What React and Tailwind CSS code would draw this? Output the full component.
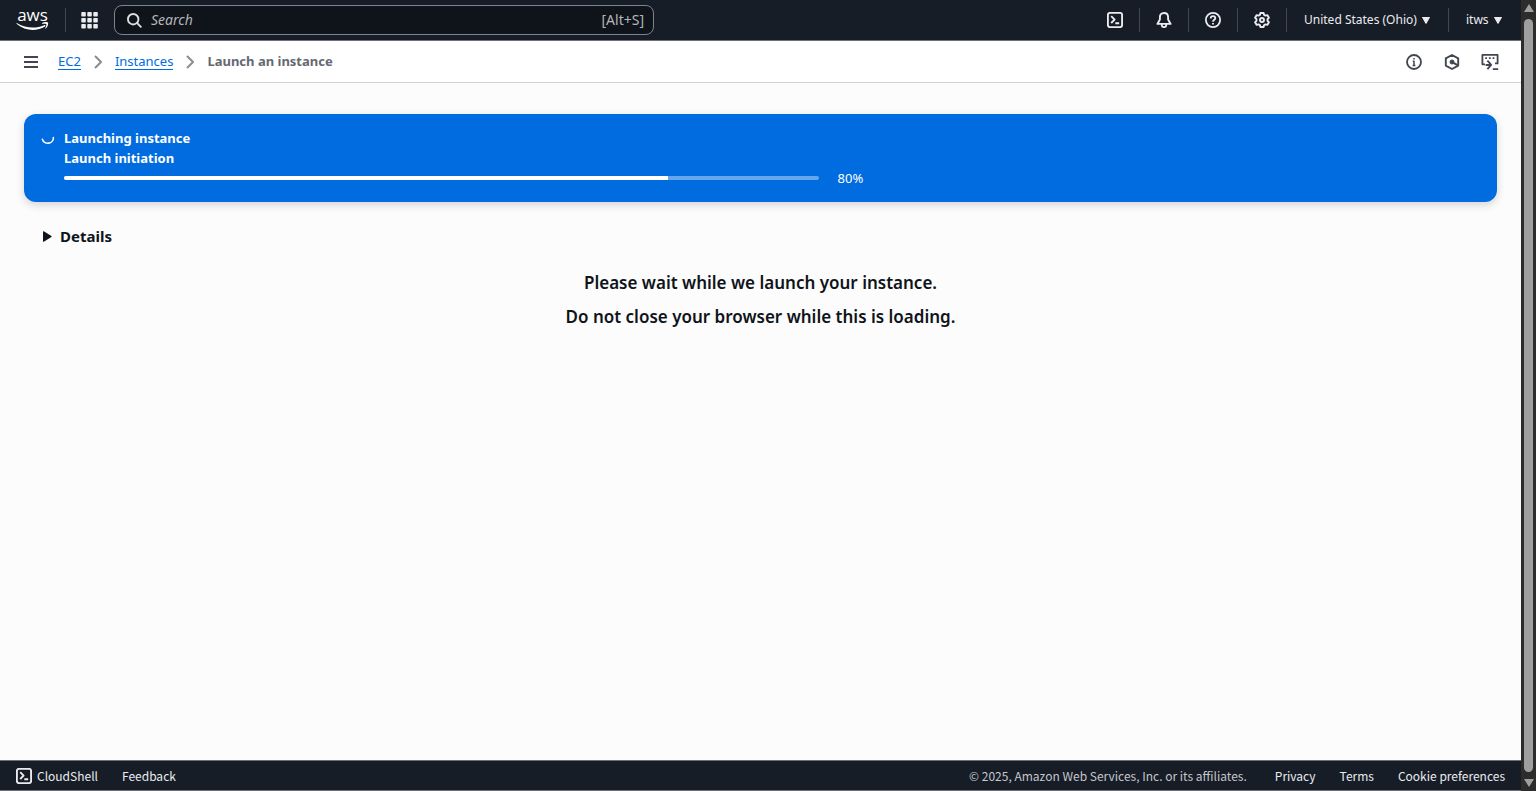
function Svg({ className, children, strokeWidth = 2 }) {
  return (
    <svg
      viewBox="0 0 16 16"
      className={className}
      fill="none"
      stroke="currentColor"
      strokeWidth={strokeWidth}
      strokeLinejoin="round"
      aria-hidden="true"
    >
      {children}
    </svg>
  );
}

function ShellIcon({ className }) {
  return (
    <Svg className={className} strokeWidth={1.9}>
      <rect x="0.9" y="0.9" width="14.2" height="14.2" rx="2" />
      <path d="M4.2 4.2 7.6 7.6 4.2 11M8.3 11.3H12.2" />
    </Svg>
  );
}

function BellIcon() {
  return (
    <Svg className="size-4" strokeWidth={1.9}>
      <path d="M8 1C5.3 1 3.9 2.9 3.9 5.2V7.6L1.4 11.9H14.6L12.1 7.6V5.2C12.1 2.9 10.7 1 8 1Z" />
      <path d="M5.8 12V13.2C5.8 14.4 6.8 15.1 8 15.1S10.2 14.4 10.2 13.2V12" />
    </Svg>
  );
}

function HelpIcon() {
  return (
    <Svg className="size-4" strokeWidth={1.8}>
      <circle cx="8" cy="8" r="7.1" />
      <path d="M5.7 6.5C5.7 5 6.7 4.2 8 4.2S10.3 5 10.3 6.2C10.3 7.8 8 7.8 8 9.8M8 10.9V12.5" />
    </Svg>
  );
}

function GearIcon() {
  return (
    <Svg className="size-4" strokeWidth={1.9}>
      <path d="M6.4 1H9.6L10.1 2.9 11.4 3.6 13.3 3.1 14.9 5.8 13.5 7.2V8.8L14.9 10.2 13.3 12.9 11.4 12.4 10.1 13.1 9.6 15H6.4L5.9 13.1 4.6 12.4 2.7 12.9 1.1 10.2 2.5 8.8V7.2L1.1 5.8 2.7 3.1 4.6 3.6 5.9 2.9Z" />
      <circle cx="8" cy="8" r="2" />
    </Svg>
  );
}

function InfoIcon() {
  return (
    <Svg className="size-4" strokeWidth={1.8}>
      <circle cx="8" cy="8" r="7" />
      <path d="M8 3.9V5.6M6.8 7.3H8V11.7M6.6 11.4H9.4" strokeWidth="1.5" />
    </Svg>
  );
}

function HexIcon() {
  return (
    <Svg className="size-4" strokeWidth={1.9}>
      <path d="M8 1 14.2 4.4V11.6L8 15 1.8 11.6V4.4Z" />
      <circle cx="8" cy="8" r="2" fill="currentColor" strokeWidth="1" />
      <path d="M8.5 8.4 13.6 11.2" />
    </Svg>
  );
}

function ConsoleIcon() {
  return (
    <Svg className="size-4 overflow-visible" strokeWidth={1.8}>
      <path d="M3 10.3H0.4V0.9H15.6V9.4H13" />
      <path d="M3.2 4.1H5M6.9 4.1H8.7M10.6 4.1H12.4" strokeWidth="1.6" />
      <path d="M3.6 11H9M5.4 6.6 9.2 10.9 5.4 15.2M10.8 15.2H16.2" />
    </Svg>
  );
}

function Caret() {
  return (
    <svg viewBox="0 0 8 7" className="h-[7px] w-2 shrink-0" fill="currentColor" aria-hidden="true">
      <path d="M0.4 0H7.6Q8.2 0 7.9 0.6L4.5 6.6Q4 7.3 3.5 6.6L0.1 0.6Q-0.2 0 0.4 0Z" />
    </svg>
  );
}

function Divider() {
  return <span className="h-6 w-px shrink-0 bg-[#424650]" />;
}

function ToolButton({ label, children }) {
  return (
    <button type="button" aria-label={label} className="flex h-10 w-12 items-center justify-center text-[#ebebf0]">
      {children}
    </button>
  );
}

function TopBar() {
  return (
    <header className="flex h-[41px] shrink-0 items-center border-b border-[#6b7079] bg-[#161d26] text-xs text-[#ebebf0]">
      <a href="#home" aria-label="AWS home" className="ml-4 flex w-[33px] flex-col items-center text-white">
        <span className="h-[13px] font-['Open_Sans',sans-serif] text-[17px] leading-[11px] font-medium">aws</span>
        <svg viewBox="0 0 33 10" className="h-[10px] w-[33px]" fill="currentColor" aria-hidden="true">
          <path d="M1.2 1.2C10 6.6 20.5 6.6 28.2 3.2 29.2 2.8 30 3.8 29 4.5 20.6 9.8 8.6 9 0.8 2 0.2 1.4 0.6 0.8 1.2 1.2Z" />
          <path d="M26 1.1C28 -0.2 31.4 -0.1 32 0.7S31.4 5.2 29.8 6.6C29.5 6.9 29.1 6.7 29.3 6.3 29.9 5 30.7 2.6 30.3 2.1S27.6 1.7 26.4 1.8C26 1.8 25.7 1.4 26 1.1Z" />
        </svg>
      </a>
      <span className="ml-4 flex">
        <Divider />
      </span>
      <button type="button" aria-label="Services" className="ml-[15px] flex size-[17px] items-center justify-center">
        <svg viewBox="0 0 17 17" className="size-[17px]" fill="currentColor" aria-hidden="true">
          {[0, 6, 12].map((y) =>
            [0, 6, 12].map((x) => <rect key={`${x}-${y}`} x={x + 0.3} y={y} width="4.5" height="4.5" rx="0.8" />)
          )}
        </svg>
      </button>
      <label className="ml-4 flex h-[30px] w-[540px] items-center rounded-lg border border-[#7d838f] bg-[#0f141a] pr-[9px] pl-3 text-[#b4b4bb]">
        <Svg className="size-[15px] shrink-0 text-[#dedee3]" strokeWidth={2}>
          <circle cx="6.6" cy="6.6" r="5.6" />
          <path d="M10.6 10.6 15.3 15.3" />
        </Svg>
        <input
          type="search"
          aria-label="Search"
          placeholder="Search"
          className="ml-[9px] min-w-0 flex-1 bg-transparent text-sm italic outline-none placeholder:text-[#b4b4bb]"
        />
        <span className="text-sm">[Alt+S]</span>
      </label>
      <nav className="ml-auto flex items-center">
        <ToolButton label="CloudShell">
          <ShellIcon className="size-4" />
        </ToolButton>
        <Divider />
        <ToolButton label="Notifications">
          <BellIcon />
        </ToolButton>
        <Divider />
        <ToolButton label="Help">
          <HelpIcon />
        </ToolButton>
        <Divider />
        <ToolButton label="Settings">
          <GearIcon />
        </ToolButton>
        <Divider />
        <button
          type="button"
          className="flex h-10 w-[161px] items-center justify-between pr-[18px] pl-[17px] whitespace-nowrap"
        >
          United States (Ohio) <Caret />
        </button>
        <Divider />
        <button type="button" className="flex h-10 w-[72px] items-center justify-between pr-[19px] pl-[17px]">
          itws <Caret />
        </button>
      </nav>
    </header>
  );
}

function Chevron() {
  return (
    <svg viewBox="0 0 8 14" className="h-[14px] w-2" fill="none" stroke="#8c8c94" strokeWidth="2" aria-hidden="true">
      <path d="M1 1 7 7 1 13" />
    </svg>
  );
}

function SubBar() {
  return (
    <div className="flex h-[42px] shrink-0 items-center border-b border-[#d0d2d8] bg-white pr-[23px] pl-[23px] text-[#424650]">
      <button type="button" aria-label="Open navigation">
        <Svg className="size-4" strokeWidth={1.8}>
          <path d="M1 3H15M1 8H15M1 13H15" />
        </Svg>
      </button>
      <nav aria-label="Breadcrumb" className="ml-[19px] flex items-center gap-[13px] text-[13px] leading-4">
        <a href="#ec2" className="border-b border-[#006ce0] text-[#006ce0]">
          EC2
        </a>
        <Chevron />
        <a href="#instances" className="border-b border-[#006ce0] text-[#006ce0]">
          Instances
        </a>
        <Chevron />
        <span className="border-b border-transparent font-bold text-[#656871]">Launch an instance</span>
      </nav>
      <div className="ml-auto flex items-center gap-[22px]">
        <button type="button" aria-label="Info">
          <InfoIcon />
        </button>
        <button type="button" aria-label="Resources">
          <HexIcon />
        </button>
        <button type="button" aria-label="Console recorder">
          <ConsoleIcon />
        </button>
      </div>
    </div>
  );
}

function Banner() {
  return (
    <section className="flex items-start rounded-xl bg-[#006ce0] pt-[14px] pr-5 pb-[14px] pl-4 text-white shadow-[0_3px_8px_rgba(0,7,22,0.16)]">
      <svg viewBox="0 0 16 16" className="mt-1 h-4 w-4 shrink-0" fill="none" stroke="currentColor" strokeWidth="1.6" strokeLinecap="round" aria-hidden="true">
        <path d="M2.4 7.2A5.6 5.4 0 0 0 13.4 5.6" />
      </svg>
      <div className="ml-2 flex-1 text-[13px] leading-5 font-bold">
        <h2>Launching instance</h2>
        <p>Launch initiation</p>
        <div className="flex items-center gap-[19px]">
          <div
            role="progressbar"
            aria-label="Launch initiation"
            aria-valuenow={80}
            className="h-1 w-[53.4%] overflow-hidden rounded-full bg-[#66a7ec]"
          >
            <div className="h-full w-4/5 bg-white" />
          </div>
          <span className="font-normal">80%</span>
        </div>
      </div>
    </section>
  );
}

function Footer() {
  return (
    <footer className="flex h-[31px] shrink-0 items-center border-y border-[#6b7079] bg-[#161d26] px-4 font-['Noto_Sans_CJK_SC',sans-serif] text-xs text-[#ebebf0]">
      <button type="button" className="flex items-center gap-[5px]">
        <ShellIcon className="size-4" /> CloudShell
      </button>
      <a href="#feedback" className="ml-6">
        Feedback
      </a>
      <span className="ml-auto text-[#c6c6cd]">© 2025, Amazon Web Services, Inc. or its affiliates.</span>
      <a href="#privacy" className="ml-7">
        Privacy
      </a>
      <a href="#terms" className="ml-6">
        Terms
      </a>
      <button type="button" className="ml-6">
        Cookie preferences
      </button>
    </footer>
  );
}

function ScrollTrack() {
  return (
    <div className="flex w-[15px] shrink-0 flex-col items-center bg-[#2c2c2c] py-1 text-[#9f9f9f]" aria-hidden="true">
      <svg viewBox="0 0 10 8" className="h-2 w-[10px] shrink-0" fill="currentColor">
        <path d="M5 0 10 8H0Z" />
      </svg>
      <div className="my-[7px] w-[9px] flex-1 rounded-full bg-[#9f9f9f]" />
      <svg viewBox="0 0 10 8" className="h-2 w-[10px] shrink-0" fill="currentColor">
        <path d="M5 8 0 0H10Z" />
      </svg>
    </div>
  );
}

export default function App() {
  return (
    <div className="flex h-screen bg-[#fcfcfc] font-['Noto_Sans',sans-serif] text-[#0f141a]">
      <div className="flex min-w-0 flex-1 flex-col">
        <TopBar />
        <SubBar />
        <main className="flex-1 px-6 pt-[31px]">
          <Banner />
          <details className="px-[19px] pt-[23px]">
            <summary className="flex list-none items-center gap-2 text-[15px] leading-[22px] font-bold">
              <svg viewBox="0 0 9 11" className="h-[11px] w-[9px]" fill="currentColor" aria-hidden="true">
                <path d="M0 0.8Q0 0 0.8 0.3L8.4 4.9Q9 5.5 8.4 6.1L0.8 10.7Q0 11 0 10.2Z" />
              </svg>
              Details
            </summary>
          </details>
          <div className="mt-[19px] text-center text-[17px] leading-[34px] font-semibold">
            <p>Please wait while we launch your instance.</p>
            <p>Do not close your browser while this is loading.</p>
          </div>
        </main>
        <Footer />
      </div>
      <ScrollTrack />
    </div>
  );
}
